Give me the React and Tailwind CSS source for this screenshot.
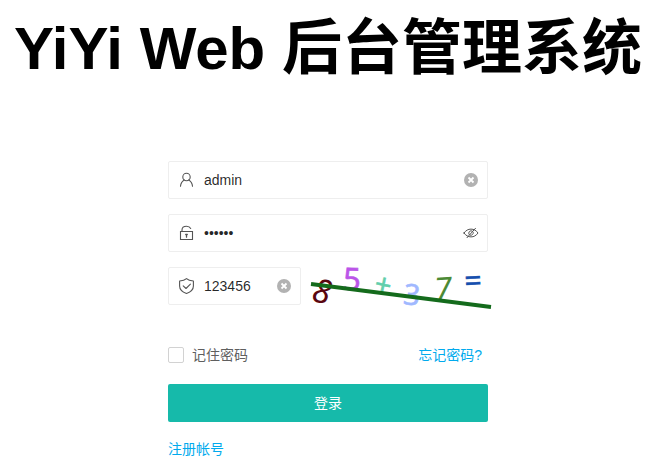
import React, { useState } from 'react'

const UserIcon = () => (
  <svg width="16" height="16" viewBox="0 0 16 16" fill="none" stroke="#555" strokeWidth="1.1" strokeLinecap="round">
    <circle cx="7.500" cy="5" r="3.700" />
    <path d="M5.300 8C3 9.200 1.800 11 1.500 14.300M9.700 8c2.300 1.200 3.500 3 3.800 6.300" />
  </svg>
)

const LockIcon = () => (
  <svg width="16" height="16" viewBox="0 0 16 16" fill="none" stroke="#555" strokeWidth="1.1" strokeLinecap="round">
    <path d="M1.500 6.500h12v8h-12z" />
    <path d="M3 6.300V5C3 2.800 4.800 1.300 7.500 1.300c2 0 3.500.8 4.200 2.200" />
    <path d="M7.500 10v2.200M6.700 9.500h1.600" strokeWidth="1.3" />
  </svg>
)

const ShieldIcon = () => (
  <svg width="16" height="16" viewBox="0 0 16 16" fill="none" stroke="#555" strokeWidth="1.1" strokeLinecap="round" strokeLinejoin="round">
    <path d="M7.500.6C6 2 3.500 2.800.6 3v5c0 3.500 2.700 6 6.900 7.500 4.200-1.500 6.900-4 6.900-7.500V3C11.500 2.800 9 2 7.500.6z" />
    <path d="M4.200 7.800l2.800 2.700 4.400-4.300" />
  </svg>
)

const ClearIcon = () => (
  <svg width="14" height="14" viewBox="0 0 14 14">
    <circle cx="7" cy="7" r="7" fill="#b2b2b2" />
    <path d="M4.500 4.500l5 5M9.500 4.500l-5 5" stroke="#fff" strokeWidth="1.800" />
  </svg>
)

const EyeOffIcon = () => (
  <svg width="16" height="16" viewBox="0 0 16 16" fill="none" stroke="#555" strokeWidth="1" strokeLinecap="round">
    <path d="M1 8c1.800-2.600 4.200-3.900 7-3.900s5.200 1.300 7 3.900c-1.800 2.600-4.200 3.900-7 3.900S2.800 10.600 1 8z" />
    <path d="M9.500 6.200a2.400 2.400 0 0 0-3.300 3.400M10.300 7.500a2.400 2.400 0 0 1-2.800 2.800" />
    <path d="M12.500 3.300l-8.500 9.400" />
  </svg>
)

const Captcha = () => (
  <svg width="180" height="40" viewBox="0 0 180 40" role="img" aria-label="验证码" className="shrink-0 overflow-visible font-['Noto_Sans',sans-serif]">
    <g textAnchor="middle" strokeWidth="0.6">
      <text x="11" y="36" fontSize="33" fontStyle="italic" fill="#5a0610" transform="rotate(12 11 24)">8</text>
      <text x="41" y="23" fontSize="31" fill="#bb55e8" stroke="#bb55e8" transform="rotate(2 41 12)">5</text>
      <text x="72" y="28" fontSize="29" fill="#62cfac" stroke="#62cfac" transform="rotate(12 72 19)">+</text>
      <text x="101" y="38" fontSize="29" fill="#a0b8ff" stroke="#a0b8ff" transform="rotate(6 101 27)">3</text>
      <text x="132" y="34" fontSize="33" fontStyle="italic" fill="#4c8a35" transform="rotate(-4 132 22)">7</text>
      <text x="162" y="24" fontSize="30" fill="#164fae" stroke="#164fae" transform="rotate(-3 162 14)">=</text>
    </g>
    <path d="M0 17L180 40" stroke="#146b1c" strokeWidth="4" />
  </svg>
)

const Field = ({ icon, label, action, actionLabel, onAction, className = '', ...rest }) => (
  <div className={`flex h-[38px] items-center rounded-xs border border-[#eee] bg-white ${className}`}>
    <span className="flex w-[35px] shrink-0 justify-center">{icon}</span>
    <input
      aria-label={label}
      className="h-full min-w-0 flex-1 bg-transparent text-sm text-black/85 outline-none"
      {...rest}
    />
    <button type="button" aria-label={actionLabel} onClick={onAction} className="flex w-8 shrink-0 justify-center">
      {action}
    </button>
  </div>
)

const App = () => {
  const [data, setData] = useState({
    username: 'admin',
    password: '123456',
    captcha: '123456',
  })
  const [showPassword, setShowPassword] = useState(false)

  const handleChange = (e) => {
    const { name, value } = e.target
    setData({ ...data, [name]: value })
  }

  const clear = (name) => setData({ ...data, [name]: '' })

  return (
    <main className="flex flex-col items-center bg-white pt-[9px] pr-2 pb-4 font-['Liberation_Sans','Noto_Sans_CJK_SC',sans-serif] text-sm">
      <h1 className="whitespace-nowrap text-[60px] leading-[80px] font-bold text-black">YiYi Web 后台管理系统</h1>

      <form onSubmit={(e) => e.preventDefault()} className="mt-[72px] flex w-full max-w-80 flex-col">
        <div className="flex flex-col gap-[15px]">
          <Field
            icon={<UserIcon />}
            label="用户名"
            name="username"
            type="text"
            value={data.username}
            onChange={handleChange}
            action={<ClearIcon />}
            actionLabel="清空"
            onAction={() => clear('username')}
          />
          <Field
            icon={<LockIcon />}
            label="密码"
            name="password"
            type={showPassword ? 'text' : 'password'}
            value={data.password}
            onChange={handleChange}
            action={<EyeOffIcon />}
            actionLabel="显示密码"
            onAction={() => setShowPassword(!showPassword)}
          />
          <div className="flex gap-2.5">
            <Field
              className="min-w-0 flex-1"
              icon={<ShieldIcon />}
              label="验证码"
              name="captcha"
              type="text"
              value={data.captcha}
              onChange={handleChange}
              action={<ClearIcon />}
              actionLabel="清空"
              onAction={() => clear('captcha')}
            />
            <div className="-mr-[3px] shrink-0">
              <Captcha />
            </div>
          </div>
        </div>

        <div className="mt-[38px] flex items-center justify-between pr-1.5">
          <label className="flex items-center gap-2 text-[#5f5f5f]">
            <input type="checkbox" name="remember" className="size-4 appearance-none rounded-xs border border-[#d2d2d2] bg-white checked:bg-[#16baaa]" />
            记住密码
          </label>
          <a href="#forget" className="text-[#01aaed]">忘记密码?</a>
        </div>

        <button type="submit" className="mt-[19px] h-[38px] rounded-xs bg-[#16baaa] text-white">登录</button>

        <a href="#register" className="mt-[17px] self-start text-[#01aaed]">注册帐号</a>
      </form>
    </main>
  )
}

export default App
